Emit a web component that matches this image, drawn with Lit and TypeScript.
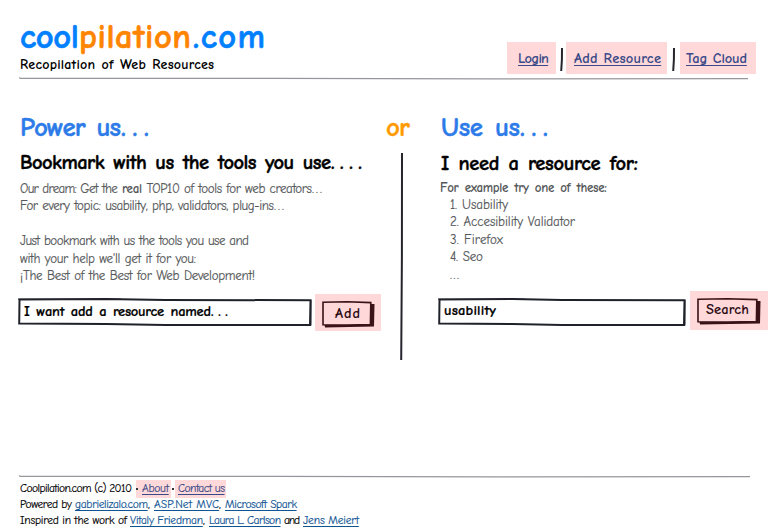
import { LitElement, html, svg, css } from "lit";
import { customElement, property } from "lit/decorators.js";

/** A run of text tracked so that it fills the given width. */
@customElement("fit-text")
class FitText extends LitElement {
  @property() text = "";
  @property({ type: Number }) w = 0;

  static styles = css`
    :host { display: inline-block; white-space: pre; flex: none; }
    :host([link]) .run { text-decoration: underline; text-decoration-thickness: 1px; text-underline-offset: 2px; text-decoration-skip-ink: none; }
  `;

  updated() {
    const run = this.renderRoot.querySelector(".run") as HTMLElement;
    run.style.letterSpacing = "0px";
    const natural = run.getBoundingClientRect().width;
    run.style.letterSpacing = `${(this.w - natural) / Math.max(1, this.text.length - 1)}px`;
    this.style.width = `${this.w}px`;
  }

  render() {
    return html`<span class="run">${this.text}</span>`;
  }
}

const fit = (text: string, w: number) => html`<fit-text .text=${text} .w=${w}></fit-text>`;
const link = (text: string, w: number) => html`<fit-text link .text=${text} .w=${w}></fit-text>`;

const field = (w: number) => html`<svg width=${w} height="29" viewBox="0 0 ${w} 29">
  ${svg`<path d="M1.5 1.5 L${w * 0.3} 1 L${w * 0.5} 2 L${w - 1.5} 2.2 L${w - 2} 27 L${w * 0.5} 27 L${w * 0.3} 26 L1.2 25.5 Z" fill="#fff" stroke="#20222a" stroke-width="2"/>
  <path d="M0 1.2H${w * 0.35} M${w - 1} 2V27.5" stroke="#20222a" stroke-width="1" fill="none"/>`}
</svg>`;

const button = (w: number) => html`<svg width=${w + 3} height="27" viewBox="0 0 ${w + 3} 27">
  ${svg`<path d="M${w - 1} 3 L${w + 2.5} 3 L${w + 2} 25.5 L3 26.5 L2.5 23.5 L${w - 1} 23 Z" fill="#3a1218"/>
  <path d="M1 1.3 L${w * 0.5} 0.8 L${w - 1.2} 1.6 L${w - 1.6} 23.6 L${w * 0.5} 24 L1 23.8 Z" fill="#ffd8d9" stroke="#3a1218" stroke-width="1.6"/>`}
</svg>`;

const rule = (w: number) => html`<svg class="rule" width=${w} height="3" viewBox="0 0 ${w} 3">
  ${svg`<path d="M0 0.5 L1.5 1.4 H${w * 0.35} L${w * 0.65} 1.8 L${w} 1.6" fill="none" stroke="#96969c" stroke-width="1.2"/>`}
</svg>`;

const bar = (h: number) => html`<svg class="bar" width="3" height=${h} viewBox="0 0 3 ${h}">
  ${svg`<path d="M2 0 L1.9 ${h * 0.5} L1.2 ${h}" fill="none" stroke="#25262d" stroke-width="2"/>`}
</svg>`;

@customElement("app-root")
class AppRoot extends LitElement {
  static styles = css`
    :host {
      display: flex; flex-direction: column; box-sizing: border-box;
      width: 781px; height: 532px; overflow: hidden; background: #fff; color: #000;
      font-family: "Comic Sans MS", "Comic Neue", Inter, "Open Sans", sans-serif;
    }
    svg { display: block; flex: none; }
    .header { display: flex; height: 77px; flex: none; padding-left: 20px; box-sizing: border-box; }
    .brand { width: 487px; padding-top: 17px; flex: none; }
    .logo { display: flex; height: 40px; line-height: 41px; font-size: 34.5px; font-weight: 700; color: #0080ff; -webkit-text-stroke: 0.6px currentColor; }
    .logo .mid { color: #ff8400; margin: 0 2px 0 0; }
    .tag { height: 16px; line-height: 16px; font-size: 14px; font-weight: 700; word-spacing: 0.08em; }
    .nav { display: flex; padding-top: 42px; height: 32px; font-size: 14.5px; font-weight: 700; color: #3a4a88; line-height: 34px; word-spacing: 0.03em; }
    .hot { background: #ffd8d9; }
    .nav .hot { box-sizing: border-box; height: 32px; }
    .nav .bar { margin-top: 6px; }
    .login { width: 49px; padding-left: 11px; margin-right: 4px; }
    .addres { width: 101px; padding-left: 8px; margin: 0 5px 0 3px; }
    .cloud { width: 76px; padding-left: 6px; margin-left: 5px; }
    .rule { margin-left: 19px; }
    .main { display: flex; height: 395px; flex: none; padding-left: 20px; }
    .left { width: 366px; flex: none; }
    .middle { width: 54px; flex: none; }
    .title { height: 34px; line-height: 35px; margin-top: 30px; font-size: 27px; font-weight: 700; color: #2c7be8; display: flex; -webkit-text-stroke: 0.4px currentColor; word-spacing: 0.12em; }
    .or { color: #ff9a00; }
    .middle .bar { margin: 9px 0 0 14px; }
    .sub { height: 24px; line-height: 25px; margin-top: 6px; font-size: 20.5px; font-weight: 700; display: flex; -webkit-text-stroke: 0.4px currentColor; word-spacing: 0.12em; }
    .right .sub { margin-top: 7px; }
    .right .title, .right .sub { margin-left: 1px; }
    .copy { margin-top: 6px; font-size: 13px; line-height: 17.4px; color: #55585a; font-weight: 400; -webkit-text-stroke: 0.15px currentColor; word-spacing: 0.05em; }
    .right .copy { margin-top: 3.6px; }
    .line { display: flex; height: 17.4px; }
    .list { padding-left: 10px; }
    .b { font-weight: 700; word-spacing: 0.15em; -webkit-text-stroke: 0; }
    .form { display: flex; margin: 10px 0 0 -2px; font-size: 14.5px; font-weight: 700; word-spacing: 0.12em; }
    .field { display: grid; flex: none; margin-top: 4px; height: 29px; line-height: 28px; }
    .field > *, .btn > * { grid-area: 1 / 1; }
    .value { display: flex; margin-left: 6px; -webkit-text-stroke: 0.2px currentColor; }
    .btn { display: grid; box-sizing: border-box; line-height: 26px; padding: 7px 0 0 7px; color: #2c0c14; align-content: start; }
    .add { width: 66px; height: 37px; margin-left: 3px; }
    .add fit-text { margin-left: 13px; }
    .search { width: 78px; height: 39px; margin-left: 4px; }
    .search fit-text { margin-left: 9px; }
    .right .form { margin: 8.4px 0 0 -2px; }
    .right .field { margin-top: 7px; line-height: 26px; }
    .right .btn { line-height: 24px; }
    .footer { padding: 3px 0 0 20px; font-size: 11.5px; line-height: 16px; -webkit-text-stroke: 0.15px currentColor; }
    .footer .line { height: 16px; align-items: center; color: #000; }
    .footer a { color: #105494; display: flex; }
    .footer .hot { display: flex; height: 18px; line-height: 18px; box-sizing: border-box; color: #3a4a88; }
    .dot { width: 2px; height: 2px; background: #333; flex: none; }
    .about { width: 35px; margin-left: 4px; align-items: center; }
    .about .dot { margin-right: 4px; }
    .about + .dot { margin-left: 1px; }
    .contact { width: 51px; padding-left: 3px; margin-left: 1px; }
    .near { margin-left: 3px; }
    .comma { width: 6px; }
  `;

  render() {
    return html`
      <div class="header">
        <div class="brand">
          <div class="logo">${fit("cool", 59)}<span class="mid">${fit("pilation", 112)}</span>${fit(".com", 72)}</div>
          <div class="tag">${fit("Recopilation of Web Resources", 194)}</div>
        </div>
        <div class="nav">
          <div class="hot login">${link("Login", 31)}</div>${bar(23)}
          <div class="hot addres">${link("Add Resource", 87)}</div>${bar(23)}
          <div class="hot cloud">${link("Tag Cloud", 61)}</div>
        </div>
      </div>
      ${rule(729)}
      <div class="main">
        <div class="left">
          <div class="title">${fit("Power us", 101)}${fit("...", 28)}</div>
          <div class="sub">${fit("Bookmark with us the tools you use", 311)}${fit("....", 31)}</div>
          <div class="copy">
            <div class="line">${fit("Our dream: Get the ", 102)}<span class="b">${fit("real", 20)}</span>${fit(" TOP10 of tools for web creators", 170)}${fit("...", 10)}</div>
            <div class="line">${fit("For every topic: usability, php, validators, plug-ins", 254)}${fit("...", 10)}</div>
            <div class="line"></div>
            <div class="line">${fit("Just bookmark with us the tools you use and", 229)}</div>
            <div class="line">${fit("with your help we'll get it for you:", 176)}</div>
            <div class="line">${fit("¡The Best of the Best for Web Development!", 235)}</div>
          </div>
          <div class="form">
            <div class="field">${field(294)}<div class="value">${fit("I want add a resource named", 187)}${fit("...", 17)}</div></div>
            <div class="hot btn add">${button(50)}${fit("Add", 25)}</div>
          </div>
        </div>
        <div class="middle">
          <div class="title or">${fit("or", 24)}</div>
          ${bar(207)}
        </div>
        <div class="right">
          <div class="title">${fit("Use us", 79)}${fit("...", 28)}</div>
          <div class="sub">${fit("I need a resource for:", 197)}</div>
          <div class="copy">
            <div class="line b">${fit("For example try one of these:", 167)}</div>
            <div class="list">
              <div class="line">${fit("1. Usability", 58)}</div>
              <div class="line">${fit("2. Accesibility Validator", 125)}</div>
              <div class="line">${fit("3. Firefox", 53)}</div>
              <div class="line">${fit("4. Seo", 33)}</div>
              <div class="line">${fit("...", 9)}</div>
            </div>
          </div>
          <div class="form">
            <div class="field">${field(248)}<div class="value">${fit("usability", 52)}</div></div>
            <div class="hot btn search">${button(61)}${fit("Search", 43)}</div>
          </div>
        </div>
      </div>
      ${rule(731)}
      <div class="footer">
        <div class="line">${fit("Coolpilation.com (c) 2010", 112)}<span class="hot about"><i class="dot"></i>${link("About", 27)}</span><i class="dot"></i><span class="hot contact">${link("Contact us", 47)}</span></div>
        <div class="line">${fit("Powered by", 52)}<a class="near">${link("gabrielizalo.com", 73)}</a><span class="comma">,</span><a>${link("ASP.Net MVC", 65)}</a><span class="comma">,</span><a>${link("Microsoft Spark", 72)}</a></div>
        <div class="line">${fit("Inspired in the work of", 107)}<a class="near">${link("Vitaly Friedman", 73)}</a><span class="comma">,</span><a>${link("Laura L. Carlson", 72)}</a><span class="near">${fit("and", 16)}</span><a class="near">${link("Jens Meiert", 56)}</a></div>
      </div>
    `;
  }
}
